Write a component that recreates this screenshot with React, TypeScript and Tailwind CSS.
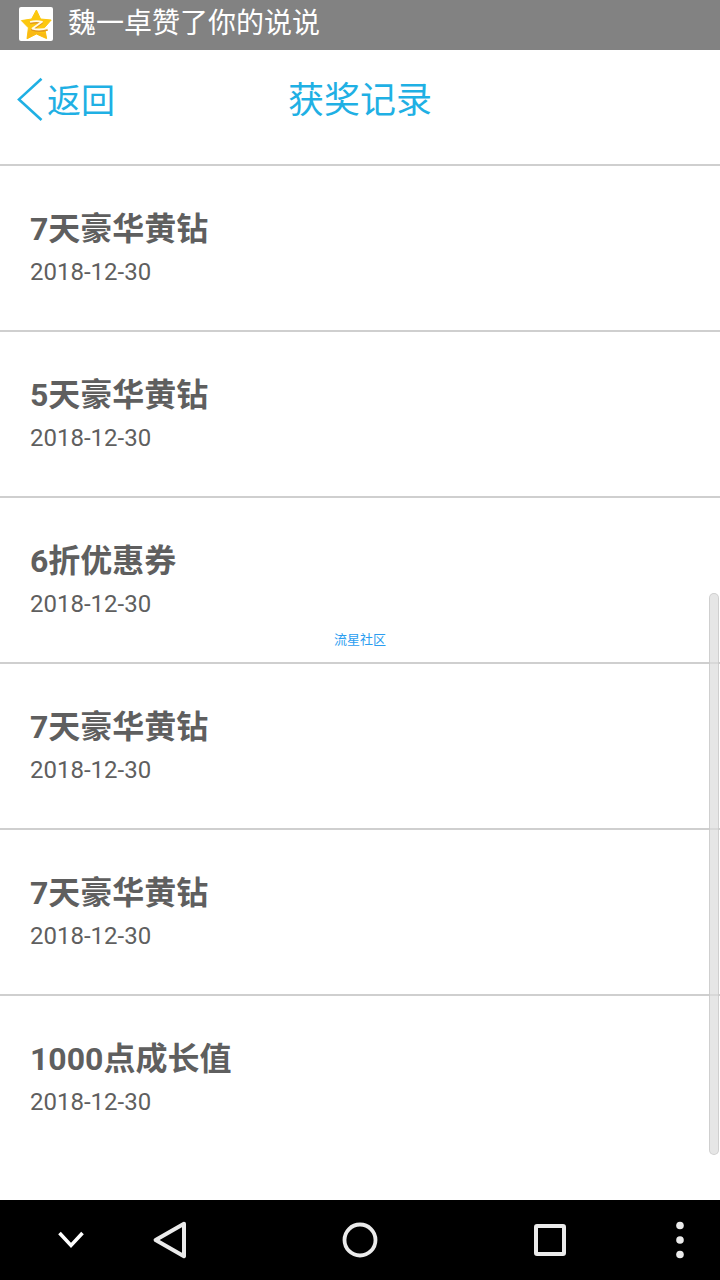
interface Prize {
  id: number;
  name: string;
  date: string;
}

const PRIZES: Prize[] = [
  { id: 1, name: '7天豪华黄钻', date: '2018-12-30' },
  { id: 2, name: '5天豪华黄钻', date: '2018-12-30' },
  { id: 3, name: '6折优惠券', date: '2018-12-30' },
  { id: 4, name: '7天豪华黄钻', date: '2018-12-30' },
  { id: 5, name: '7天豪华黄钻', date: '2018-12-30' },
  { id: 6, name: '1000点成长值', date: '2018-12-30' },
];

function QzoneIcon() {
  return (
    <svg viewBox="0 0 34 34" className="size-[34px] shrink-0" aria-hidden="true">
      <rect width="34" height="34" rx="2" fill="#fff" />
      <path
        d="M17.4 3 L21.6 12 L32.2 13 L25.6 20.6 L27.6 31.6 L17.4 27 L8 31.8 L9.4 20.8 L2.4 13.6 L12.6 12 Z"
        fill="#fcc80f"
        stroke="#fcc80f"
        strokeWidth="1"
        strokeLinejoin="round"
      />
      <path d="M9.4 23 L8 31.8 L17.4 27 L27.6 31.6 L26.6 26 Q18 27 9.4 23 Z" fill="#fab915" />
      <path
        d="M11 16 Q17 14.6 22.6 15.8 L13.2 22.6 Q20 25 28.6 22.6"
        fill="none"
        stroke="#e39a1f"
        strokeWidth="2.6"
        strokeLinejoin="round"
      />
      <path
        d="M11 15 Q17 13.4 23 14.8 L13.4 21.6 Q20.4 23.6 29 21.2"
        fill="none"
        stroke="#fffbe8"
        strokeWidth="1.8"
        strokeLinejoin="round"
      />
    </svg>
  );
}

function StatusBar() {
  return (
    <div className="flex h-[50px] items-start bg-[#828282] pl-[19px] text-white">
      <div className="pt-[7px]">
        <QzoneIcon />
      </div>
      <p className="truncate pl-[15px] text-[28px] leading-[48px]">魏一卓赞了你的说说</p>
    </div>
  );
}

function Header() {
  return (
    <header className="grid h-[114px] grid-cols-[1fr_auto_1fr] items-center pb-3 text-[#1fb0e4]">
      <button type="button" className="flex items-center justify-self-start pl-4 text-[34px] leading-[48px]">
        <svg viewBox="0 0 31 48" className="h-12 w-[31px]" fill="none" aria-hidden="true">
          <path d="M25.5 1.8 L3 22.4 L25.5 43" stroke="currentColor" strokeWidth="2.6" />
        </svg>
        返回
      </button>
      <h1 className="text-4xl leading-[48px]">获奖记录</h1>
    </header>
  );
}

function NavBar() {
  return (
    <nav className="grid h-20 grid-cols-[142fr_56fr_324fr_56fr_142fr] items-center bg-black text-[#ebebeb]">
      <button type="button" aria-label="隐藏" className="justify-self-center">
        <svg viewBox="0 0 28 20" className="h-5 w-7" fill="none">
          <path d="M2.5 3 L14 15.4 L25.5 3" stroke="#fff" strokeWidth="3.6" />
        </svg>
      </button>
      <button type="button" aria-label="返回" className="justify-self-center">
        <svg viewBox="0 0 40 40" className="size-10" fill="none">
          <path d="M34 3.8 L5.6 20 L34 36.2 Z" stroke="currentColor" strokeWidth="4" strokeLinejoin="round" />
        </svg>
      </button>
      <button type="button" aria-label="主页" className="justify-self-center">
        <svg viewBox="0 0 40 40" className="size-10" fill="none">
          <circle cx="20" cy="20" r="15.5" stroke="currentColor" strokeWidth="3.8" />
        </svg>
      </button>
      <button type="button" aria-label="最近任务" className="justify-self-center">
        <svg viewBox="0 0 40 40" className="size-10" fill="none">
          <rect x="6" y="6" width="28" height="28" rx="1" stroke="currentColor" strokeWidth="4" />
        </svg>
      </button>
      <button type="button" aria-label="更多" className="justify-self-end pr-5">
        <svg viewBox="0 0 40 40" className="size-10" fill="currentColor">
          <circle cx="20" cy="5.5" r="3.8" />
          <circle cx="20" cy="20" r="3.8" />
          <circle cx="20" cy="34.5" r="3.8" />
        </svg>
      </button>
    </nav>
  );
}

export default function App() {
  return (
    <div className="relative flex min-h-screen flex-col bg-white font-[Roboto,'Noto_Sans_CJK_SC',sans-serif]">
      <StatusBar />
      <Header />
      <main className="flex-1 pb-10">
        <ul>
          {PRIZES.map((prize) => (
            <li key={prize.id} className="border-t-2 border-[#cfcfcf] px-[30px] py-10 text-[#5f5f5f]">
              <h2 className="text-[32px] leading-[46px] font-bold">{prize.name}</h2>
              <p className="mt-0.5 text-2xl leading-[36px]">{prize.date}</p>
            </li>
          ))}
        </ul>
      </main>
      <NavBar />

      {/* Filigrane */}
      <div className="pointer-events-none absolute inset-0 flex items-center justify-center">
        <span className="text-[13px] leading-4 text-[#2b9df0]">流星社区</span>
      </div>

      {/* Barre de défilement */}
      <div className="pointer-events-none absolute right-px bottom-[125px] h-[562px] w-[10px] rounded-full border border-[#c4c4c4]/70 bg-[#dcdcdc]/70" />
    </div>
  );
}
